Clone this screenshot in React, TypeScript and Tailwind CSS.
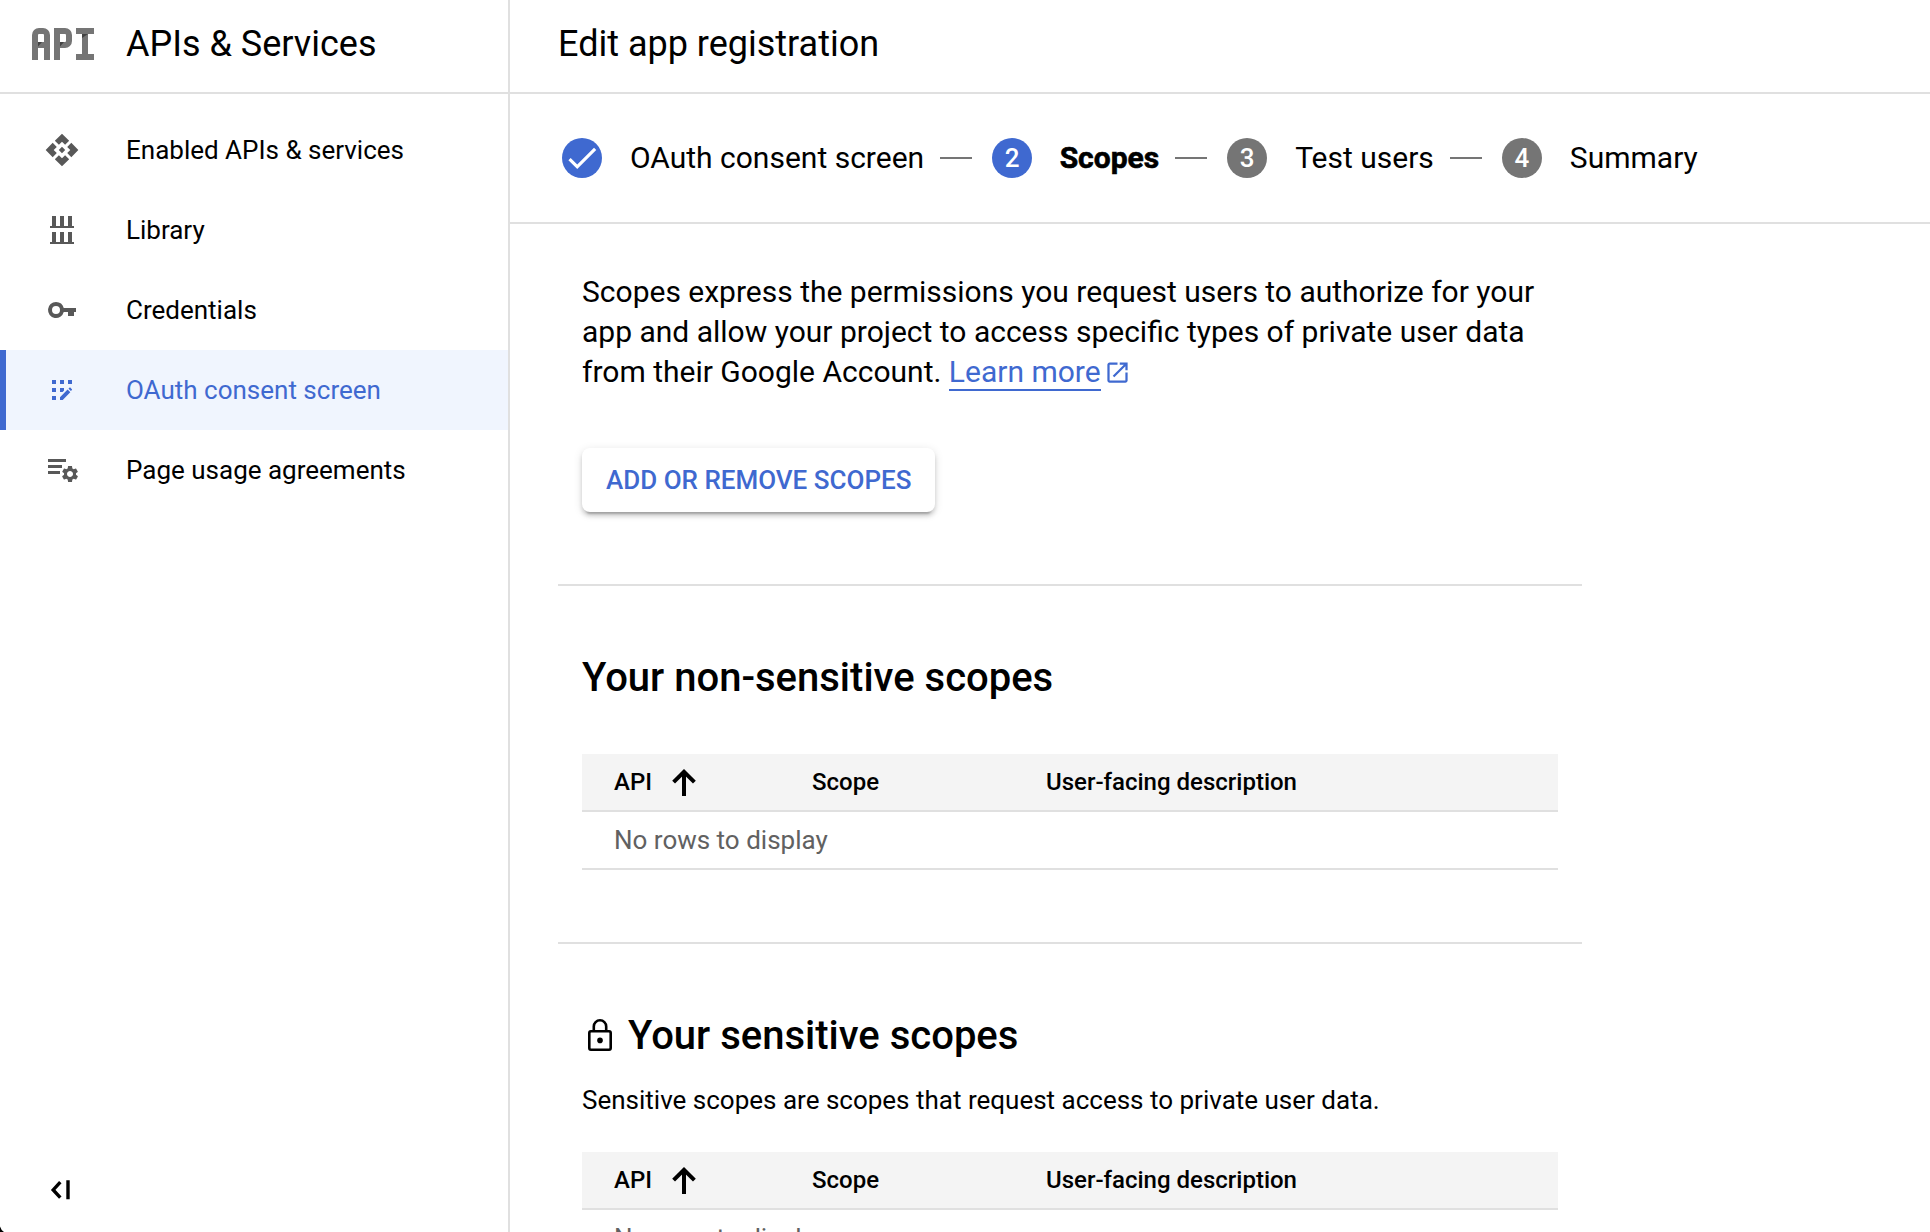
import type { ReactNode } from "react";

function Svg36({ children }: { children: ReactNode }) {
  return (
    <svg width="36" height="36" viewBox="0 0 36 36" fill="currentColor" className="shrink-0">
      {children}
    </svg>
  );
}

const GEAR =
  "M19.14 12.94c.04-.3.06-.61.06-.94 0-.32-.02-.64-.07-.94l2.03-1.58c.18-.14.23-.41.12-.61l-1.92-3.32c-.12-.22-.37-.29-.59-.22l-2.39.96c-.5-.38-1.03-.7-1.62-.94l-.36-2.54c-.04-.24-.24-.41-.48-.41h-3.84c-.24 0-.43.17-.47.41l-.36 2.54c-.59.24-1.13.57-1.62.94l-2.39-.96c-.22-.08-.47 0-.59.22L2.74 8.87c-.12.21-.08.47.12.61l2.03 1.58c-.05.3-.09.63-.09.94s.02.64.07.94l-2.03 1.58c-.18.14-.23.41-.12.61l1.92 3.32c.12.22.37.29.59.22l2.39-.96c.5.38 1.03.7 1.62.94l.36 2.54c.05.24.24.41.48.41h3.84c.24 0 .44-.17.47-.41l.36-2.54c.59-.24 1.13-.56 1.62-.94l2.39.96c.22.08.47 0 .59-.22l1.92-3.32c.12-.22.07-.47-.12-.61l-2.01-1.58zM12 15.6c-1.98 0-3.6-1.62-3.6-3.6s1.62-3.6 3.6-3.6 3.6 1.62 3.6 3.6-1.62 3.6-3.6 3.6z";

const ApiIcon = (
  <Svg36>
    <path
      transform="translate(0.5 0.5) scale(1.4583)"
      d="M14.2 12l-2.2 2.2-2.2-2.2 2.2-2.2 2.2 2.2zm-2.2-5.7l2.12 2.12 2.8-2.8L12 .8 7.08 5.62l2.8 2.8L12 6.3zm-5.7 5.7l2.12-2.12-2.8-2.8L.8 12l4.82 4.92 2.8-2.8L6.3 12zm11.4 0l-2.12 2.12 2.8 2.8L23.2 12l-4.82-4.92-2.8 2.8L17.7 12zm-5.7 5.7l-2.12-2.12-2.8 2.8L12 23.2l4.92-4.82-2.8-2.8L12 17.7z"
    />
  </Svg36>
);

const LibraryIcon = (
  <Svg36>
    <path d="M8 4h4v10h4V4h4v10h4V4h4v10h2v2H6v-2h2zM8 20h4v10h4V20h4v10h4V20h4v10h2v2H6v-2h2z" />
  </Svg36>
);

const KeyIcon = (
  <Svg36>
    <path
      fillRule="evenodd"
      d="M12 10a8 8 0 0 1 7.75 6H32v4h-2v4h-6v-4h-4.25A8 8 0 1 1 12 10zm0 4a4 4 0 1 0 0 8 4 4 0 0 0 0-8z"
    />
  </Svg36>
);

const ConsentIcon = (
  <Svg36>
    <path d="M8 8h4v4H8zM16 8h4v4h-4zM24 8h4v4h-4zM8 16h4v4H8zM8 24h4v4H8zM16 16h4v2.6L18.6 20H16z" />
    <path d="M16 28v-2.8l7.6-7.6 2.7 2.7-7.6 7.7zM24.5 16.7l1.1-1.1c.2-.2.5-.2.7 0l1.6 1.6c.2.2.2.5 0 .7l-1 1.1z" />
  </Svg36>
);

const AgreementsIcon = (
  <Svg36>
    <path d="M4 7h18v3H4zM4 13h14v3H4zM4 19h12v3H4z" />
    <path transform="translate(16 12) scale(0.835)" d={GEAR} />
  </Svg36>
);

const NAV = [
  { label: "Enabled APIs & services", icon: ApiIcon },
  { label: "Library", icon: LibraryIcon },
  { label: "Credentials", icon: KeyIcon },
  { label: "OAuth consent screen", icon: ConsentIcon, active: true },
  { label: "Page usage agreements", icon: AgreementsIcon },
];

function Logo() {
  return (
    <svg width="62" height="32" viewBox="0 0 62 32" className="shrink-0">
      <g fill="none" stroke="#757575" strokeWidth="6">
        <path d="M3 32V7a4 4 0 0 1 4-4h4a4 4 0 0 1 4 4v25M3 17h12" />
        <path d="M25 32V3h8a4 4 0 0 1 4 4v6a4 4 0 0 1-4 4h-8" />
        <path d="M44 3h18M44 29h18M53 3v26" />
      </g>
      <path fill="#424242" d="M6 14h4l-4 4.5zM28 14h4l-4 4.5zM50 6h6l-6 4z" />
    </svg>
  );
}

function Sidebar() {
  return (
    <aside className="flex w-[510px] shrink-0 flex-col border-r-2 border-[#e0e0e0]">
      <div className="flex h-[94px] shrink-0 items-center gap-8 border-b-2 border-[#e0e0e0] pb-1 pl-8 text-[36px]">
        <Logo />
        <span>APIs &amp; Services</span>
      </div>
      <nav className="flex flex-1 flex-col pt-4">
        {NAV.map((n) => (
          <a
            key={n.label}
            className={
              n.active
                ? "flex h-20 items-center gap-[46px] border-l-6 border-[#3f69d0] bg-[#f0f5fe] pl-[38px] text-[26px] text-[#3f69d0]"
                : "flex h-20 items-center gap-[46px] pl-11 text-[26px]"
            }
          >
            <span className={n.active ? "text-[#3f69d0]" : "text-[#585858]"}>{n.icon}</span>
            <span>{n.label}</span>
          </a>
        ))}
      </nav>
      <div className="flex h-[84px] shrink-0 items-center pl-11">
        <svg width="36" height="36" viewBox="0 0 36 36" fill="none" stroke="#000" strokeWidth="3.4">
          <path d="M16.3 10.2 9.2 17.9l7.1 7.7M24 8.3v18.9" />
        </svg>
      </div>
    </aside>
  );
}

const STEPS = ["OAuth consent screen", "Scopes", "Test users", "Summary"];

function Stepper() {
  return (
    <div className="flex h-[130px] shrink-0 items-center border-b-2 border-[#e0e0e0] pl-[52px] text-[30px]">
      {STEPS.map((s, i) => (
        <div key={s} className="flex items-center">
          <span
            className={
              i < 2
                ? "flex size-10 items-center justify-center rounded-full bg-[#3f69d0] text-[26px] font-medium text-white"
                : "flex size-10 items-center justify-center rounded-full bg-[#757575] text-[26px] font-medium text-white"
            }
          >
            {i === 0 ? (
              <svg width="38" height="38" viewBox="0 0 24 24" fill="#fff" className="mr-px">
                <path d="M9 16.17 4.83 12l-1.42 1.41L9 19 21 7l-1.41-1.41z" />
              </svg>
            ) : (
              i + 1
            )}
          </span>
          <span className={i === 1 ? "pb-px pl-[27.5px] font-bold [-webkit-text-stroke:0.6px_black]" : "pb-px pl-7"}>
            {s}
          </span>
          {i < 3 && <span className="mr-5 ml-4 h-0.5 w-8 bg-[#757575]" />}
        </div>
      ))}
    </div>
  );
}

function ScopeTable() {
  return (
    <div className="flex flex-col">
      <div className="grid h-[58px] shrink-0 grid-cols-[198px_234px_1fr] items-center border-b-2 border-[#e0e0e0] bg-[#f4f4f4] pl-8 text-[24px] font-medium">
        <div className="flex items-center gap-4">
          <span>API</span>
          <svg width="32" height="32" viewBox="0 0 32 32" fill="none" stroke="#000" strokeWidth="4">
            <path d="M5.6 16.2 16 5.8l10.4 10.4M16 5.5V30" />
          </svg>
        </div>
        <span>Scope</span>
        <span>User-facing description</span>
      </div>
      <div className="flex h-[58px] shrink-0 items-center border-b-2 border-[#e0e0e0] pl-8 text-[26px] text-[#616161]">
        No rows to display
      </div>
    </div>
  );
}

export default function App() {
  return (
    <div className="relative flex h-[1232px] w-[1930px] overflow-hidden bg-white font-['Roboto',sans-serif] text-black">
      <Sidebar />
      <main className="flex min-w-0 flex-1 flex-col">
        <header className="flex h-[94px] shrink-0 items-center border-b-2 border-[#e0e0e0] pb-1 pl-12 text-[36px]">
          Edit app registration
        </header>
        <Stepper />
        <div className="ml-12 w-[1024px]">
          <section className="h-[362px] border-b-2 border-[#e0e0e0] px-6 pt-12">
            <p className="text-[30px] leading-10">
              Scopes express the permissions you request users to authorize for your
              <br />
              app and allow your project to access specific types of private user data
              <br />
              from their Google Account.{" "}
              <a className="border-b-2 border-[#3f69d0] text-[#3f69d0]">Learn more</a>
              <svg
                width="27"
                height="27"
                viewBox="0 0 24 24"
                fill="#3f69d0"
                className="ml-[3.5px] inline-block align-[-3.5px]"
              >
                <path d="M19 19H5V5h7V3H5c-1.11 0-2 .9-2 2v14c0 1.1.89 2 2 2h14c1.1 0 2-.9 2-2v-7h-2v7zM14 3v2h3.59l-9.83 9.83 1.41 1.41L19 6.41V10h2V3h-7z" />
              </svg>
            </p>
            <button className="mt-14 flex h-16 items-center rounded-lg bg-white px-6 text-[26px] font-medium text-[#3f69d0] shadow-[0_6px_2px_-4px_rgba(0,0,0,0.2),0_4px_4px_0_rgba(0,0,0,0.14),0_2px_10px_0_rgba(0,0,0,0.12)]">
              ADD OR REMOVE SCOPES
            </button>
          </section>
          <section className="h-[358px] border-b-2 border-[#e0e0e0] px-6 pt-16">
            <h2 className="mb-12 text-[40px] leading-14 font-medium">Your non-sensitive scopes</h2>
            <ScopeTable />
          </section>
          <section className="px-6 pt-16">
            <h2 className="flex items-center gap-2.5 text-[40px] leading-14 font-medium">
              <svg width="36" height="36" viewBox="0 0 36 36" fill="none" stroke="#000" strokeWidth="2.6">
                <rect x="7.3" y="13.3" width="21.4" height="18.4" rx="1.6" />
                <path d="M11.8 13V8.5a6.2 6.2 0 0 1 12.4 0V13" />
                <circle cx="18" cy="22.4" r="2.8" fill="#000" stroke="none" />
              </svg>
              Your sensitive scopes
            </h2>
            <p className="mt-4 mb-8 text-[26px] leading-10">
              Sensitive scopes are scopes that request access to private user data.
            </p>
            <ScopeTable />
          </section>
        </div>
      </main>
      <svg width="4" height="6" viewBox="0 0 4 6" className="absolute bottom-0 left-0">
        <path d="M0 0.5Q1 4 4 6H0z" fill="#000" />
      </svg>
    </div>
  );
}
